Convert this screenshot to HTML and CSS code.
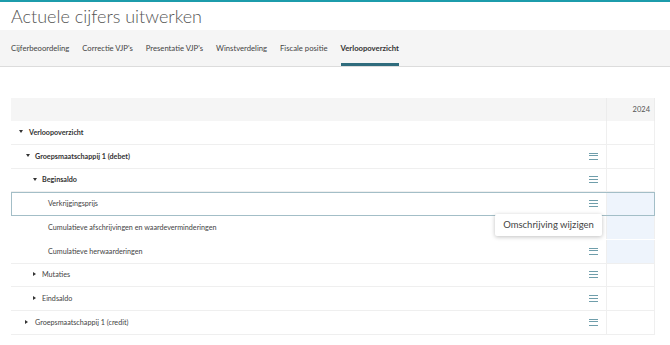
FILE: index.html
```html
<!DOCTYPE html>
<html>
<head>
	<title>Actuele cijfers uitwerken</title>
	<meta charset="utf-8">
	<link rel="stylesheet" href="styles.css">
</head>
<body>
	<header class="top">
		<h1>Actuele cijfers uitwerken</h1>
	</header>
	<nav class="tabs">
		<a>Cijferbeoordeling</a>
		<a>Correctie VJP's</a>
		<a>Presentatie VJP's</a>
		<a>Winstverdeling</a>
		<a>Fiscale positie</a>
		<a class="active">Verloopoverzicht</a>
	</nav>

	<div class="grid">
		<div class="row head">
			<div class="name"></div>
			<div class="year">2024</div>
		</div>
		<div class="row bold l0">
			<div class="name"><span class="tog down"></span>Verloopoverzicht</div>
			<div class="year"></div>
		</div>
		<div class="row bold l1">
			<div class="name"><span class="tog down"></span>Groepsmaatschappij 1 (debet)<i class="menu"></i></div>
			<div class="year"></div>
		</div>
		<div class="row bold l2">
			<div class="name"><span class="tog down"></span>Beginsaldo<i class="menu"></i></div>
			<div class="year"></div>
		</div>
		<div class="row l3 selected inner">
			<div class="name"><span class="tog"></span>Verkrijgingsprijs<i class="menu"></i></div>
			<div class="year tint"></div>
		</div>
		<div class="row l3 inner">
			<div class="name"><span class="tog"></span>Cumulatieve afschrijvingen en waardeverminderingen</div>
			<div class="year tint"></div>
		</div>
		<div class="row l3">
			<div class="name"><span class="tog"></span>Cumulatieve herwaarderingen<i class="menu"></i></div>
			<div class="year tint"></div>
		</div>
		<div class="row l2">
			<div class="name"><span class="tog right"></span>Mutaties<i class="menu"></i></div>
			<div class="year"></div>
		</div>
		<div class="row l2">
			<div class="name"><span class="tog right"></span>Eindsaldo<i class="menu"></i></div>
			<div class="year"></div>
		</div>
		<div class="row l1">
			<div class="name"><span class="tog right"></span>Groepsmaatschappij 1 (credit)<i class="menu"></i></div>
			<div class="year"></div>
		</div>

		<div class="popup">Omschrijving wijzigen</div>
	</div>
</body>
</html>
```

FILE: styles.css
```css
*{
	box-sizing: border-box;
}
body{
	margin: 0;
	font-family: Lato, 'Open Sans', sans-serif;
	color: #444;
	background: #fff;
}
.top{
	border-top: 2px solid #1c9cab;
	height: 30px;
	padding-left: 11px;
}
.top h1{
	margin: 0;
	font-weight: 300;
	font-size: 18px;
	line-height: 28px;
	color: #555;
}
.tabs{
	display: flex;
	gap: 13px;
	height: 37px;
	padding-left: 11px;
	background: #f5f5f5;
	border-bottom: 1px solid #dcdcdc;
}
.tabs a{
	font-size: 7.7px;
	line-height: 36px;
	color: #444;
	border-bottom: 3px solid transparent;
}
.tabs a.active{
	font-weight: 700;
	color: #333;
	border-bottom-color: #2f6c7d;
}

.grid{
	position: relative;
	margin: 31px 15px 0 11px;
}
.row{
	display: grid;
	grid-template-columns: 1fr 49px;
	height: 23.75px;
	border-bottom: 1px solid #efefef;
	font-size: 7.2px;
}
.row.inner{
	border-bottom-color: transparent;
}
.row.head{
	height: 23px;
	background: #f5f5f5;
	border-bottom: none;
}
.name{
	display: flex;
	align-items: center;
	position: relative;
	padding-right: 8px;
}
.year{
	border-left: 1px solid #efefef;
	border-right: 1px solid #efefef;
	text-align: right;
	padding-right: 4px;
	line-height: 23px;
	font-size: 7.5px;
	color: #555;
}
.head .year{
	border-color: #ececec;
}
.tint{
	background: #eef4fc;
}
.bold .name{
	font-weight: 700;
	color: #333;
}
.tog{
	width: 12px;
	height: 6px;
	flex: none;
	position: relative;
}
.tog.down::before{
	content: "";
	position: absolute;
	left: 1px;
	top: 1px;
	border-left: 2.5px solid transparent;
	border-right: 2.5px solid transparent;
	border-top: 3.5px solid #333;
}
.tog.right::before{
	content: "";
	position: absolute;
	left: 2px;
	top: 0.5px;
	border-top: 2.5px solid transparent;
	border-bottom: 2.5px solid transparent;
	border-left: 3px solid #333;
}
.l0 .name{ padding-left: 6px; }
.l1 .name{ padding-left: 12px; }
.l2 .name{ padding-left: 19px; }
.l3 .name{ padding-left: 25px; }
.l0 .tog.down::before{ left: 2px; }
.l1 .tog.down::before{ left: 3px; }
.l2 .tog.down::before{ left: 3px; }
.l2 .tog.right::before{ left: 3px; }

.menu{
	margin-left: auto;
	width: 9px;
	height: 7px;
	border-top: 1.5px solid #6f9eab;
	border-bottom: 1.5px solid #6f9eab;
	position: relative;
}
.menu::before{
	content: "";
	position: absolute;
	left: 0;
	right: 0;
	top: 1.5px;
	border-top: 1.5px solid #6f9eab;
}
.selected{
	outline: 1px solid #a3bec7;
	outline-offset: -1px;
}

.popup{
	position: absolute;
	left: 484px;
	top: 116px;
	width: 107px;
	height: 22px;
	background: #fff;
	box-shadow: 0 1px 4px rgba(0,0,0,.25);
	border-radius: 2px;
	font-size: 9.5px;
	line-height: 22px;
	text-align: center;
	color: #444;
}
```
